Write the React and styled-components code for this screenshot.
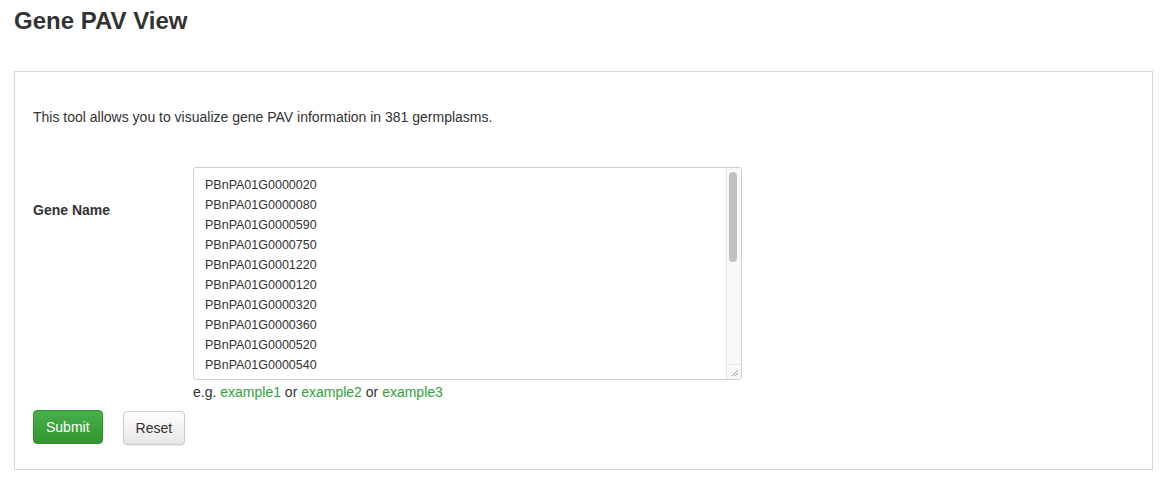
import React from "react";
import styled, { createGlobalStyle } from "styled-components";

const GlobalStyle = createGlobalStyle`
  html, body {
    margin: 0;
    padding: 0;
    background: #fff;
  }
  body {
    font-family: "Liberation Sans", Arial, Helvetica, sans-serif;
    font-size: 14px;
    color: #333;
  }
`;

const Page = styled.div`
  padding: 0 12px 0 14px;
`;

const Title = styled.h2`
  margin: 0;
  padding-top: 7px;
  font-size: 24px;
  font-weight: 700;
  line-height: 28px;
  color: #333;
`;

const Panel = styled.div`
  margin-top: 36px;
  border: 1px solid #d6d6d6;
  padding: 35px 18px 24px 18px;
  height: 338px;
`;

const Intro = styled.p`
  margin: 0 0 40px 0;
  font-size: 14px;
  line-height: 20px;
  color: #333;
`;

const FormRow = styled.div`
  display: flex;
  align-items: flex-start;
`;

const Label = styled.label`
  width: 160px;
  flex: none;
  padding-top: 35px;
  font-weight: 700;
  font-size: 14px;
  color: #333;
`;

const Field = styled.div`
  display: flex;
  flex-direction: column;
`;

const AreaWrap = styled.div`
  position: relative;
  width: 549px;
  height: 213px;
`;

const GeneArea = styled.textarea`
  box-sizing: border-box;
  display: block;
  width: 100%;
  height: 100%;
  border: 1px solid #cfcfcf;
  border-radius: 3px;
  padding: 7px 26px 0 11px;
  font-family: "Liberation Sans", Arial, Helvetica, sans-serif;
  font-size: 12.5px;
  line-height: 20px;
  color: #333;
  resize: none;
  outline: none;
  overflow: hidden;
`;

/* drawn scrollbar, lies over the textarea's right edge */
const Track = styled.div`
  position: absolute;
  top: 1px;
  right: 1px;
  bottom: 1px;
  width: 14px;
  background: #f8f8f8;
  border-left: 1px solid #e6e6e6;
  border-radius: 0 2px 2px 0;
  pointer-events: none;
`;

const Thumb = styled.div`
  position: absolute;
  top: 4px;
  left: 2px;
  width: 8px;
  height: 90px;
  border-radius: 4px;
  background: #c0c0c0;
`;

const Corner = styled.div`
  position: absolute;
  left: 0;
  right: 0;
  bottom: 0;
  height: 14px;
  border-top: 1px solid #e6e6e6;
  background: #f8f8f8;
`;

const Hint = styled.div`
  margin-top: 3px;
  font-size: 14px;
  line-height: 18px;
  color: #333;
`;

const ExampleLink = styled.a`
  color: #2ea33a;
  text-decoration: none;
  cursor: pointer;
`;

const Actions = styled.div`
  display: flex;
  gap: 20px;
  margin-top: 9px;
`;

const Button = styled.button`
  box-sizing: border-box;
  height: 34px;
  padding: 0 12px;
  border-radius: 4px;
  font-family: "Liberation Sans", Arial, Helvetica, sans-serif;
  font-size: 14px;
  cursor: pointer;
  border: 1px solid ${(p) => (p.$primary ? "#2f8f32" : "#cccccc")};
  color: ${(p) => (p.$primary ? "#fff" : "#333")};
  background: ${(p) =>
    p.$primary
      ? "linear-gradient(#46b04a, #31962f)"
      : "linear-gradient(#ffffff, #e6e6e6)"};
  box-shadow: ${(p) =>
    p.$primary ? "none" : "0 1px 1px rgba(0,0,0,0.08)"};
  margin-top: ${(p) => (p.$primary ? "0" : "1px")};
`;

const genes = [
  "PBnPA01G0000020",
  "PBnPA01G0000080",
  "PBnPA01G0000590",
  "PBnPA01G0000750",
  "PBnPA01G0001220",
  "PBnPA01G0000120",
  "PBnPA01G0000320",
  "PBnPA01G0000360",
  "PBnPA01G0000520",
  "PBnPA01G0000540",
  "PBnPA01G0000610",
  "PBnPA01G0000640",
  "PBnPA01G0000700",
  "PBnPA01G0000810",
  "PBnPA01G0000870",
  "PBnPA01G0000930",
  "PBnPA01G0001010",
  "PBnPA01G0001090",
  "PBnPA01G0001150",
  "PBnPA01G0001280",
];

const ResizeGrip = () => (
  <svg
    width="9"
    height="9"
    viewBox="0 0 9 9"
    style={{ position: "absolute", right: 2, bottom: 2 }}
  >
    <path d="M8 2 L2 8 M8 5 L5 8" stroke="#9a9a9a" strokeWidth="1" />
  </svg>
);

const App = () => {
  return (
    <Page>
      <GlobalStyle />
      <Title>Gene PAV View</Title>
      <Panel>
        <Intro>
          This tool allows you to visualize gene PAV information in 381 germplasms.
        </Intro>
        <FormRow>
          <Label>Gene Name</Label>
          <Field>
            <AreaWrap>
              <GeneArea defaultValue={genes.join("\n")} />
              <Track>
                <Thumb />
                <Corner>
                  <ResizeGrip />
                </Corner>
              </Track>
            </AreaWrap>
            <Hint>
              e.g. <ExampleLink>example1</ExampleLink> or{" "}
              <ExampleLink>example2</ExampleLink> or{" "}
              <ExampleLink>example3</ExampleLink>
            </Hint>
          </Field>
        </FormRow>
        <Actions>
          <Button $primary>Submit</Button>
          <Button>Reset</Button>
        </Actions>
      </Panel>
    </Page>
  );
};

export default App;
